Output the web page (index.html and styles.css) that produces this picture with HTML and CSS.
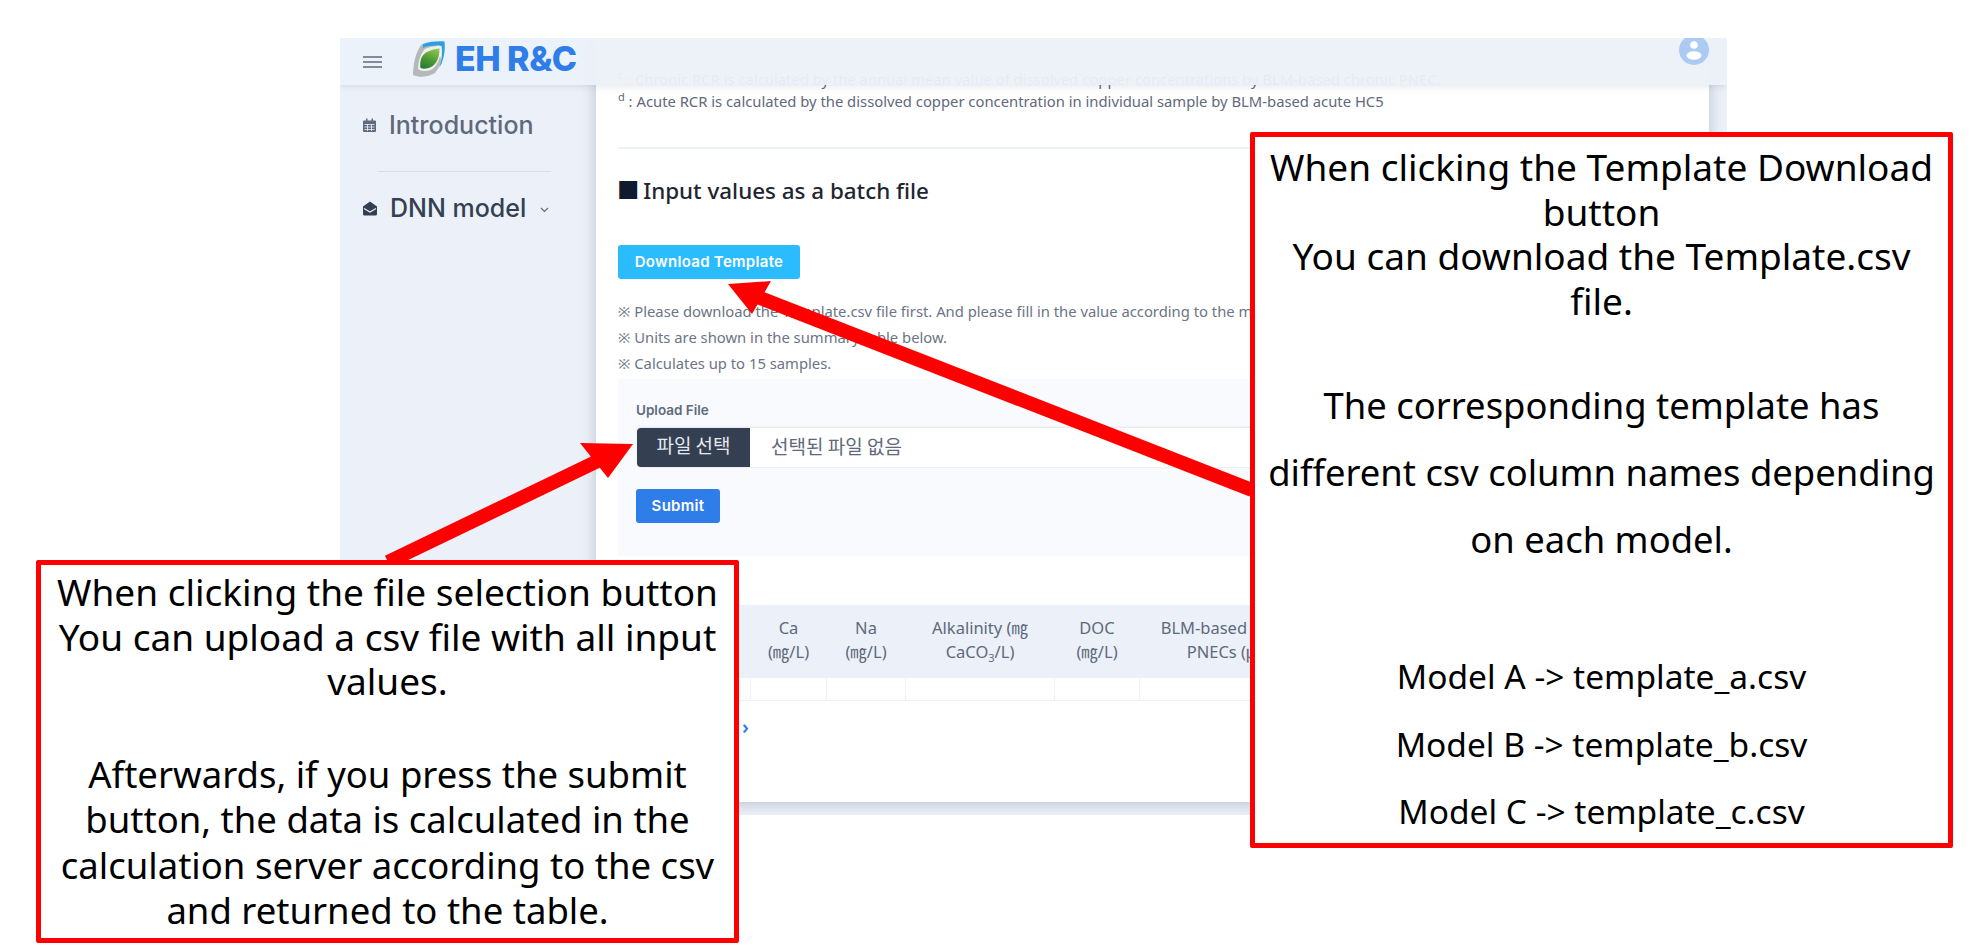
FILE: index.html
```html
<!DOCTYPE html>
<html lang="en">
<head>
    <meta charset="UTF-8">
    <title>EH R&amp;C</title>
    <link rel="stylesheet" href="styles.css">
</head>
<body>
    <div class="app">
        <!-- top bar lies over the scrolled content -->
        <header class="topbar">
            <svg class="burger" width="19" height="12" viewBox="0 0 19 12"><path d="M0 1h19M0 6h19M0 11h19" stroke="#5f6b7c" stroke-width="1.4"/></svg>
            <svg class="leaf" width="33" height="37" viewBox="0 0 33 37">
                <defs>
                    <linearGradient id="leafgreen" x1="0.7" y1="0" x2="0.3" y2="1">
                        <stop offset="0" stop-color="#8cc44c"/>
                        <stop offset="0.55" stop-color="#4c9a34"/>
                        <stop offset="1" stop-color="#2a7c33"/>
                    </linearGradient>
                </defs>
                <path d="M9 3C3 10 0 22 0 34 6 37 16 36 22 32L29 22 24 4Z" fill="#b4b8b9"/>
                <path d="M12 8C18 5 24 5 28 5 28 14 26 24 18 29 12 31 7 30 5 28 5 20 8 12 12 8Z" fill="#eef0f0"/>
                <path d="M10 3C16 0.500 26 0 31.500 0.500 32.500 9 31 18 27 26 29 17 29.500 10 28.500 5 22 4 15 4.500 10 7Z" fill="#2f9fe0"/>
                <path d="M26.500 7.500C26.500 16 24 23 18 26 14 28 10 28 7.500 27 6.500 21 8 15 13 11.500 17 9 22 8 26.500 7.500Z" fill="url(#leafgreen)"/>
            </svg>
            <span class="brand">EH R&amp;C</span>
            <svg class="avatar" width="30" height="30" viewBox="0 0 30 30"><circle cx="15" cy="15" r="15" fill="#abcbf3"/><circle cx="15" cy="10" r="3.800" fill="#fff"/><ellipse cx="15" cy="20.500" rx="7.500" ry="4.200" fill="#fff"/></svg>
        </header>

        <aside class="sidebar">
            <a class="navitem">
                <svg width="13" height="14" viewBox="0 0 13 14"><path d="M1 2.5h11a1 1 0 0 1 1 1V13a1 1 0 0 1-1 1H1a1 1 0 0 1-1-1V3.500a1 1 0 0 1 1-1zM3 0.500h1.500v3H3zM8.500 0.500H10v3H8.500z" fill="#5f6b7c"/><path d="M1.500 6.500h10M1.500 9h10M1.500 11.500h10M4.500 6v7M8.500 6v7" stroke="#ecf1f9" stroke-width="0.8"/></svg>
                <span>Introduction</span>
            </a>
            <div class="navline"></div>
            <a class="navitem dark">
                <svg width="14" height="15" viewBox="0 0 14 15"><path d="M7 0.500 14 5.500V13a1.500 1.500 0 0 1-1.500 1.500h-11A1.500 1.500 0 0 1 0 13V5.500z" fill="#343f52"/><path d="M1 7.500 7 11l6-3.500" stroke="#ecf1f9" stroke-width="1.100" fill="none"/></svg>
                <span>DNN model</span>
                <svg class="caret" width="9" height="6" viewBox="0 0 9 6"><path d="M1 1l3.500 3.500L8 1" stroke="#5f6b7c" stroke-width="1.200" fill="none"/></svg>
            </a>
        </aside>

        <main class="card">
            <p class="foot"><sup>c</sup> : Chronic RCR is calculated by the annual mean value of dissolved copper concentrations by BLM-based chronic PNEC.</p>
            <p class="foot"><sup>d</sup> : Acute RCR is calculated by the dissolved copper concentration in individual sample by BLM-based acute HC5</p>
            <hr class="rule">
            <h3 class="title"><span class="square">■</span> Input values as a batch file</h3>
            <a class="btn sky">Download Template</a>
            <ul class="notes">
                <li>※ Please download the Template.csv file first. And please fill in the value according to the model.</li>
                <li>※ Units are shown in the summary table below.</li>
                <li>※ Calculates up to 15 samples.</li>
            </ul>
            <form class="upload">
                <label class="uplabel">Upload File</label>
                <div class="fileinput">
                    <span class="filebtn">파일 선택</span>
                    <span class="filename">선택된 파일 없음</span>
                </div>
                <a class="btn blue">Submit</a>
            </form>
            <table class="results">
                <thead>
                    <tr>
                        <th class="c0"></th>
                        <th class="c1">Ca<br>(㎎/L)</th>
                        <th class="c2">Na<br>(㎎/L)</th>
                        <th class="c3">Alkalinity (㎎<br>CaCO<sub>3</sub>/L)</th>
                        <th class="c4">DOC<br>(㎎/L)</th>
                        <th class="c5">BLM-based chronic<br>PNECs (㎍/L)</th>
                        <th></th>
                    </tr>
                </thead>
                <tbody>
                    <tr><td></td><td></td><td></td><td></td><td></td><td></td><td></td></tr>
                </tbody>
            </table>
            <div class="pager">›</div>
        </main>
    </div>

    <!-- annotation layer -->
    <svg class="arrows" width="1979" height="952" viewBox="0 0 1979 952">
        <path d="M750 294 1252 490" stroke="#f00" stroke-width="14"/>
        <polygon points="728,284 771,281 752,314" fill="#f00"/>
        <path d="M388 562 604 458" stroke="#f00" stroke-width="14"/>
        <polygon points="633,444 580,443 608,478" fill="#f00"/>
    </svg>
    <div class="callout left">
        <p>When clicking the file selection button<br>You can upload a csv file with all input values.</p>
        <p class="gap">Afterwards, if you press the submit button, the data is calculated in the calculation server according to the csv and returned to the table.</p>
    </div>
    <div class="callout right">
        <p>When clicking the Template Download button<br>You can download the Template.csv file.</p>
        <p class="wide">The corresponding template has different csv column names depending on each model.</p>
        <p class="wide models">Model A -&gt; template_a.csv<br>Model B -&gt; template_b.csv<br>Model C -&gt; template_c.csv</p>
    </div>
</body>
</html>
```

FILE: styles.css
```css
* {
    box-sizing: border-box;
}
body {
    margin: 0;
    background-color: #fff;
    font-family: "Noto Sans", "Noto Sans CJK KR", sans-serif;
}

/* app frame */
.app {
    position: relative;
    display: flex;
    width: 1387px;
    height: 777px;
    margin: 38px 0 0 340px;
    padding-right: 18px;
    padding-bottom: 13px;
    overflow: hidden;
    background-color: #ecf1f9;
}
.topbar {
    position: absolute;
    top: 0;
    left: 0;
    z-index: 2;
    display: flex;
    align-items: center;
    width: 100%;
    height: 47px;
    padding: 0 18px 0 23px;
    background-color: rgba(236, 241, 249, 0.95);
    box-shadow: 0 2px 6px rgba(60, 70, 100, 0.12);
}
.burger {
    margin-top: 1px;
}
.leaf {
    margin-left: 31px;
    margin-top: -5px;
}
.brand {
    margin-left: 9px;
    margin-top: -6px;
    font-family: Inter, sans-serif;
    font-size: 34px;
    font-weight: 800;
    letter-spacing: -0.5px;
    color: #2f7de8;
}
.avatar {
    margin-left: auto;
    margin-top: -24px;
}

/* sidebar */
.sidebar {
    flex: none;
    width: 256px;
    padding: 69px 0 0 23px;
}
.navitem {
    display: flex;
    align-items: center;
    height: 36px;
    font-family: Inter, sans-serif;
    font-size: 25px;
    font-weight: 500;
    color: #60697b;
}
.navitem span {
    margin-left: 13px;
}
.navitem.dark {
    color: #343f52;
}
.caret {
    margin-left: 14px;
    margin-top: 3px;
}
.navline {
    width: 173px;
    height: 1px;
    margin: 28px 0 18px 15px;
    background-color: #d9dfea;
}

/* main card */
.card {
    flex: 1;
    padding: 30px 21px 0 22px;
    background-color: #fff;
    box-shadow: 0 2px 14px rgba(60, 70, 100, 0.28);
}
.foot {
    margin: 0;
    font-size: 14.800px;
    line-height: 22px;
    color: #60697b;
}
.foot sup {
    font-size: 11px;
    line-height: 0;
}
.rule {
    height: 2px;
    margin: 35px 0 0;
    border: 0;
    background-color: #eef1f8;
}
.title {
    margin: 27px 0 0 -1px;
    font-size: 22.400px;
    font-weight: 500;
    line-height: 30px;
    color: #1f2533;
}
.square {
    margin-right: -2px;
    color: #0f1a2e;
}
.btn {
    display: inline-block;
    height: 34px;
    border-radius: 3px;
    font-family: Inter, sans-serif;
    font-size: 15px;
    font-weight: 600;
    letter-spacing: 0.3px;
    line-height: 34px;
    color: #fff;
    text-align: center;
}
.sky {
    width: 182px;
    margin-top: 39px;
    background-color: #2bbcff;
}
.blue {
    width: 84px;
    background-color: #2f7de8;
}
.notes {
    margin: 19px 0 0;
    padding: 0;
    list-style: none;
    font-size: 14.800px;
    line-height: 26px;
    color: #6c7485;
}
.upload {
    height: 177px;
    margin-top: 3px;
    padding: 18px 18px 0;
    background-color: #f8fafd;
}
.uplabel {
    display: block;
    font-family: Inter, sans-serif;
    font-size: 13.500px;
    font-weight: 600;
    line-height: 26px;
    color: #5f6b7c;
}
.fileinput {
    display: flex;
    align-items: center;
    height: 39px;
    margin: 5px 0 22px 1px;
    overflow: hidden;
    border-radius: 4px;
    background-color: #fff;
    box-shadow: 0 -1px 2px rgba(60, 70, 100, 0.12), 0 1px 1px rgba(60, 70, 100, 0.06);
    font-family: "Noto Sans CJK KR", sans-serif;
    font-size: 19px;
}
.filebtn {
    width: 113px;
    height: 100%;
    background-color: #343f52;
    color: #e6e9ef;
    line-height: 34px;
    text-align: center;
}
.filename {
    margin-left: 21px;
    margin-top: -4px;
    color: #60697b;
}

/* result table */
.results {
    width: 100%;
    margin-top: 49px;
    border-collapse: collapse;
    table-layout: fixed;
    font-size: 16.500px;
    color: #60697b;
}
.results th {
    height: 72px;
    padding: 0 0 1px;
    background-color: #ecf1f9;
    font-weight: 400;
    line-height: 24px;
}
.results td {
    height: 23px;
    border: 1px solid #eef1f8;
}
.results sub {
    font-size: 11px;
    line-height: 0;
}
.c0 { width: 132px; }
.c1 { width: 76px; }
.c2 { width: 79px; }
.c3 { width: 149px; }
.c4 { width: 85px; }
.c5 { width: 190px; }
.pager {
    margin: 14px 0 0 124px;
    font-size: 20px;
    font-weight: 600;
    line-height: 24px;
    color: #2f7de8;
}

/* arrows and callouts over the screenshot */
.arrows {
    position: absolute;
    top: 0;
    left: 0;
}
.callout {
    position: absolute;
    border: 5px solid #f00;
    border-radius: 2px;
    background-color: #fff;
    font-family: "Noto Sans", sans-serif;
    font-size: 37px;
    line-height: 44.500px;
    color: #000;
    text-align: center;
}
.callout p {
    margin: 0;
}
.callout.left {
    top: 560px;
    left: 36px;
    width: 703px;
    height: 383px;
    padding: 5px 12px 0;
}
.callout.left .gap {
    margin-top: 48px;
    font-size: 36.500px;
    line-height: 45.500px;
}
.callout.right {
    top: 132px;
    left: 1250px;
    width: 703px;
    height: 716px;
    padding: 8px 6px 0;
}
.callout.right .wide {
    margin-top: 49px;
    font-size: 36.400px;
    line-height: 67px;
}
.callout.right .models {
    font-size: 33.500px;
    line-height: 67.500px;
    margin-top: 70px;
}
```
